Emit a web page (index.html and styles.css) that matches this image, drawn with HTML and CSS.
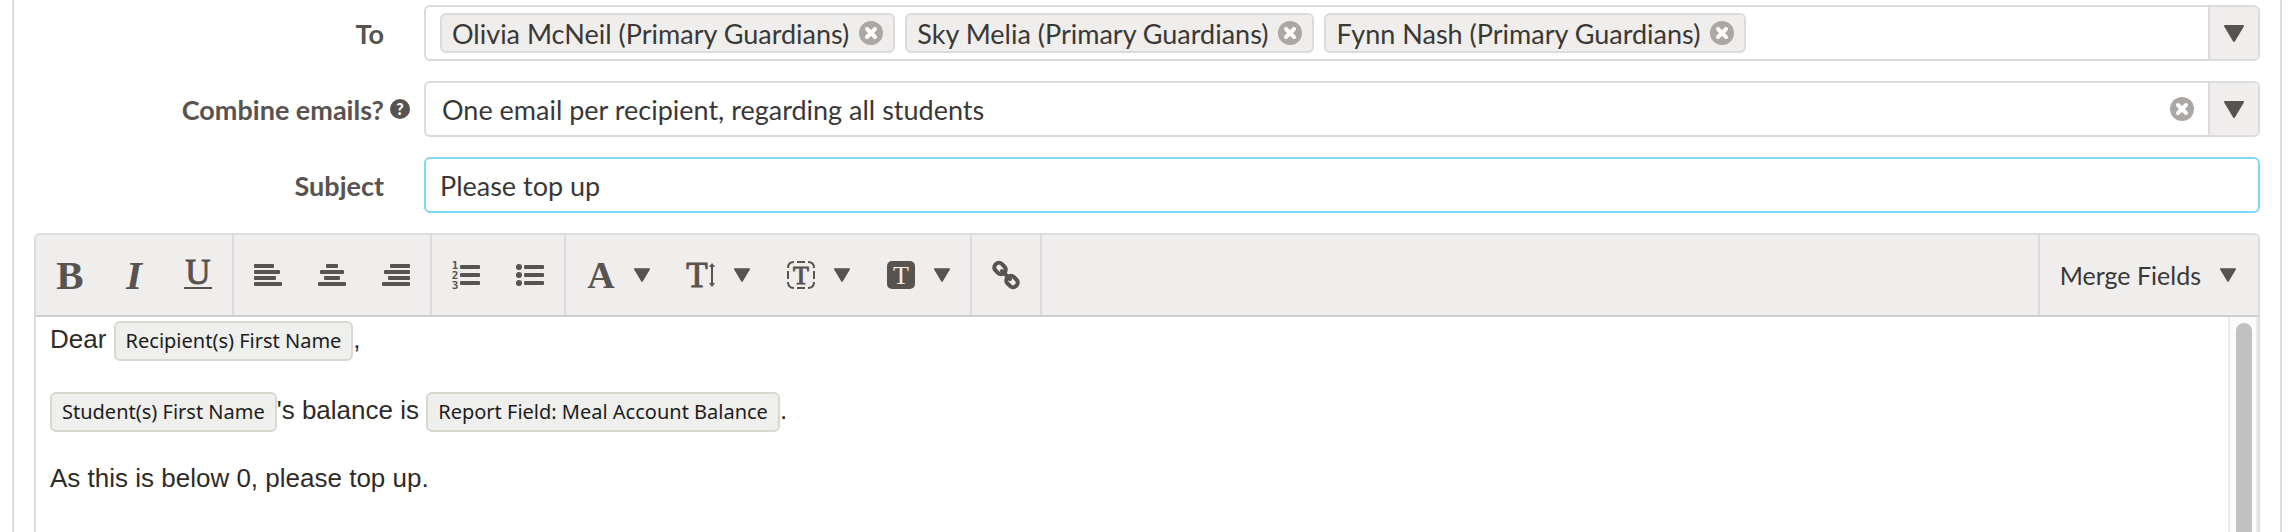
FILE: index.html
```
<!DOCTYPE html>
<html lang="en">
<head>
    <meta charset="UTF-8">
    <meta name="viewport" content="width=device-width, initial-scale=1.0">
    <title>Compose Email</title>
    <link rel="stylesheet" href="styles.css">
</head>
<body>
    <!-- Shared icon shapes -->
    <svg class="sprite" aria-hidden="true">
        <symbol id="icon-clear" viewBox="0 0 24 24">
            <circle cx="12" cy="12" r="12" fill="#aba7a4"/>
            <path d="M8 8l8 8M16 8l-8 8" class="cross"/>
        </symbol>
        <symbol id="icon-caret" viewBox="0 0 20 17">
            <path d="M1 1h18l-9 15z" fill="#595350" stroke="#595350" stroke-width="2" stroke-linejoin="round"/>
        </symbol>
    </svg>

    <form class="panel">
        <div class="row">
            <div class="label-cell"><label for="to">To</label></div>
            <div class="field">
                <div class="chips">
                    <span class="chip">Olivia McNeil (Primary Guardians)
                        <button type="button" class="clear" aria-label="Remove Olivia McNeil"><svg><use href="#icon-clear"/></svg></button>
                    </span>
                    <span class="chip">Sky Melia (Primary Guardians)
                        <button type="button" class="clear" aria-label="Remove Sky Melia"><svg><use href="#icon-clear"/></svg></button>
                    </span>
                    <span class="chip">Fynn Nash (Primary Guardians)
                        <button type="button" class="clear" aria-label="Remove Fynn Nash"><svg><use href="#icon-clear"/></svg></button>
                    </span>
                    <input type="text" id="to" name="to" class="chip-input">
                </div>
                <button type="button" class="open" aria-label="Show recipients"><svg><use href="#icon-caret"/></svg></button>
            </div>
        </div>

        <div class="row">
            <div class="label-cell with-help">
                <label for="combine">Combine emails?</label>
                <button type="button" class="help" aria-label="Help">?</button>
            </div>
            <div class="field">
                <select id="combine" name="combine" class="combine">
                    <option>One email per recipient, regarding all students</option>
                </select>
                <button type="button" class="clear" aria-label="Clear selection"><svg><use href="#icon-clear"/></svg></button>
                <button type="button" class="open" aria-label="Show options"><svg><use href="#icon-caret"/></svg></button>
            </div>
        </div>

        <div class="row">
            <div class="label-cell"><label for="subject">Subject</label></div>
            <input type="text" id="subject" name="subject" class="subject" value="Please top up">
        </div>

        <div class="editor">
            <div class="toolbar">
                <div class="group">
                    <button type="button" class="tool" aria-label="Bold">
                        <svg class="icon" viewBox="0 0 28 28"><text x="14" y="28" class="serif bold" font-size="41">B</text></svg>
                    </button>
                    <button type="button" class="tool" aria-label="Italic">
                        <svg class="icon" viewBox="0 0 28 28"><text x="14" y="28" class="serif bold italic" font-size="41">I</text></svg>
                    </button>
                    <button type="button" class="tool" aria-label="Underline">
                        <svg class="icon" viewBox="0 0 28 28"><text x="14" y="23" class="serif stroked" font-size="35">U</text><rect y="26" width="28" height="2"/></svg>
                    </button>
                </div>
                <div class="group">
                    <button type="button" class="tool" aria-label="Align left">
                        <svg class="icon" viewBox="0 0 28 28"><rect y="3" width="20" height="4" rx="1"/><rect y="9" width="26" height="4" rx="1"/><rect y="15" width="22" height="4" rx="1"/><rect y="21" width="28" height="4" rx="1"/></svg>
                    </button>
                    <button type="button" class="tool" aria-label="Align center">
                        <svg class="icon" viewBox="0 0 28 28"><rect x="8" y="3" width="12" height="4" rx="1"/><rect x="2" y="9" width="24" height="4" rx="1"/><rect x="6" y="15" width="16" height="4" rx="1"/><rect y="21" width="28" height="4" rx="1"/></svg>
                    </button>
                    <button type="button" class="tool" aria-label="Align right">
                        <svg class="icon" viewBox="0 0 28 28"><rect x="8" y="3" width="20" height="4" rx="1"/><rect x="2" y="9" width="26" height="4" rx="1"/><rect x="6" y="15" width="22" height="4" rx="1"/><rect y="21" width="28" height="4" rx="1"/></svg>
                    </button>
                </div>
                <div class="group">
                    <button type="button" class="tool" aria-label="Numbered list">
                        <svg class="icon" viewBox="0 0 28 28"><g class="digits"><text x="3" y="8">1</text><text x="3" y="18">2</text><text x="3" y="28">3</text></g><rect x="8" y="4" width="20" height="4" rx="1"/><rect x="8" y="12" width="20" height="4" rx="1"/><rect x="8" y="20" width="20" height="4" rx="1"/></svg>
                    </button>
                    <button type="button" class="tool" aria-label="Bulleted list">
                        <svg class="icon" viewBox="0 0 28 28"><circle cx="3" cy="6" r="3"/><circle cx="3" cy="14" r="3"/><circle cx="3" cy="22" r="3"/><rect x="8" y="4" width="20" height="4" rx="1"/><rect x="8" y="12" width="20" height="4" rx="1"/><rect x="8" y="20" width="20" height="4" rx="1"/></svg>
                    </button>
                </div>
                <div class="group">
                    <button type="button" class="tool menu" aria-label="Font family">
                        <svg class="icon" viewBox="0 0 28 28"><text x="14" y="27" class="serif bold" font-size="38">A</text></svg>
                        <svg class="caret"><use href="#icon-caret"/></svg>
                    </button>
                    <button type="button" class="tool menu" aria-label="Font size">
                        <svg class="icon" viewBox="0 0 28 28"><text x="10" y="26" class="serif stroked" font-size="35">T</text><path d="M25 4v20" class="line"/><path d="M25 2l3 4h-6zM25 26l3-4h-6z"/></svg>
                        <svg class="caret"><use href="#icon-caret"/></svg>
                    </button>
                    <button type="button" class="tool menu" aria-label="Text color">
                        <svg class="icon" viewBox="0 0 28 28"><path d="M1 7q0-6 6-6M21 1q6 0 6 6M27 21q0 6-6 6M7 27q-6 0-6-6M10 1h8M10 27h8M1 10v8M27 10v8" class="line"/><text x="14" y="23" class="serif stroked" font-size="26">T</text></svg>
                        <svg class="caret"><use href="#icon-caret"/></svg>
                    </button>
                    <button type="button" class="tool menu" aria-label="Background color">
                        <svg class="icon" viewBox="0 0 28 28"><rect width="28" height="28" rx="5"/><text x="14" y="23" class="serif light" font-size="26">T</text></svg>
                        <svg class="caret"><use href="#icon-caret"/></svg>
                    </button>
                </div>
                <div class="group">
                    <button type="button" class="tool" aria-label="Insert link">
                        <svg class="icon" viewBox="0 0 28 28"><g class="chain"><rect x="2" y="3" width="12" height="9" rx="4" transform="rotate(45 8 7.5)"/><rect x="14" y="16" width="12" height="9" rx="4" transform="rotate(45 20 20.5)"/><path d="M10 10l8 8"/></g></svg>
                    </button>
                </div>
                <button type="button" class="merge">Merge Fields <svg class="caret"><use href="#icon-caret"/></svg></button>
            </div>

            <div class="content">
                <div class="message">
                    <p>Dear <span class="token">Recipient(s) First Name</span>,</p>
                    <p><span class="token">Student(s) First Name</span>'s balance is <span class="token">Report Field: Meal Account Balance</span>.</p>
                    <p>As this is below 0, please top up.</p>
                </div>
                <div class="scrollbar"><div class="thumb"></div></div>
            </div>
        </div>
    </form>
</body>
</html>
```
FILE: styles.css
```
* {
    box-sizing: border-box;
}
body {
    margin: 0;
    background-color: #fff;
    color: #3a3836;
    font-family: Lato, "Noto Sans", sans-serif;
    font-size: 27px;
}
button, input, select {
    font: inherit;
    color: inherit;
}
button {
    display: flex;
    align-items: center;
    justify-content: center;
    padding: 0;
    border: none;
    background: none;
    cursor: pointer;
}
.sprite {
    display: none;
}
.cross {
    stroke: #fff;
    stroke-width: 4;
    stroke-linecap: round;
}
.panel {
    display: flex;
    flex-direction: column;
    min-height: 100vh;
    margin: 0 10px 0 12px;
    padding: 5px 20px 0;
    border: solid #dcdada;
    border-width: 0 2px;
}

/* Form rows */
.row {
    display: flex;
    margin-bottom: 20px;
}
.label-cell {
    display: flex;
    flex: none;
    align-items: center;
    justify-content: flex-end;
    width: 390px;
    padding-right: 40px;
    color: #595350;
    font-weight: bold;
}
.with-help {
    gap: 6px;
    padding-right: 14px;
}
.help {
    width: 20px;
    height: 20px;
    border-radius: 50%;
    background-color: #595350;
    color: #fff;
    font-size: 16px;
    font-weight: 900;
    line-height: 20px;
}
.field, .subject {
    display: flex;
    flex: 1;
    align-items: center;
    min-width: 0;
    height: 56px;
    border: 2px solid #dcdada;
    border-radius: 6px;
    background-color: #fff;
}
.subject {
    padding: 0 14px;
    border-color: #7cd8f3;
    outline: none;
}
.chips {
    display: flex;
    flex: 1;
    gap: 10px;
    min-width: 0;
    padding-left: 14px;
}
.chip {
    display: flex;
    flex: none;
    align-items: center;
    gap: 10px;
    height: 40px;
    padding: 0 10px;
    border: 2px solid #dcdada;
    border-radius: 6px;
    background-color: #efeeec;
}
.chip .cross {
    stroke: #efeeec;
}
.chip-input {
    flex: 1;
    min-width: 0;
    border: none;
    outline: none;
}
.clear, .clear svg {
    flex: none;
    width: 24px;
    height: 24px;
}
.field > .clear {
    margin: 0 14px;
}
.combine {
    flex: 1;
    min-width: 0;
    height: 100%;
    padding: 0 16px;
    border: none;
    background: none;
    appearance: none;
}
.open {
    flex: none;
    width: 50px;
    height: 100%;
    border-left: 2px solid #dcdada;
    border-radius: 0 4px 4px 0;
    background-color: #efeeec;
}
.open svg {
    width: 20px;
    height: 17px;
}

/* Editor */
.editor {
    display: flex;
    flex: 1;
    flex-direction: column;
    border: 2px solid #dedbdb;
    border-bottom: none;
    border-radius: 6px 6px 0 0;
}
.toolbar {
    display: flex;
    height: 82px;
    border-bottom: 2px solid #cecece;
    border-radius: 4px 4px 0 0;
    background-color: #efeeec;
}
.group {
    display: flex;
    padding: 0 2px;
    border-right: 2px solid #dcdada;
}
.tool {
    width: 64px;
}
.menu {
    gap: 19px;
    width: 100px;
}
.icon {
    width: 28px;
    height: 28px;
    fill: #595350;
    overflow: visible;
}
.caret {
    width: 16px;
    height: 14px;
}
.serif {
    font-family: "Liberation Serif", serif;
    text-anchor: middle;
}
.bold {
    font-weight: bold;
}
.italic {
    font-style: italic;
}
.stroked {
    stroke: #595350;
    stroke-width: 1;
}
.light {
    fill: #efeeec;
}
.line {
    fill: none;
    stroke: #595350;
    stroke-width: 2;
}
.digits {
    font-family: "DejaVu Sans Mono", monospace;
    font-size: 11px;
    font-weight: bold;
    text-anchor: middle;
}
.chain {
    fill: none;
    stroke: #595350;
    stroke-width: 4;
    stroke-linecap: round;
}
.merge {
    gap: 19px;
    margin-left: auto;
    padding: 0 22px 0 20px;
    border-left: 2px solid #dcdada;
    font-size: 25px;
}
.content {
    display: flex;
    flex: 1;
}
.message {
    flex: 1;
    padding: 4px 14px;
    color: #2f2b29;
    font-family: "Liberation Sans", Arial, sans-serif;
    font-size: 26px;
    line-height: 30px;
}
.message p {
    margin: 0 0 31px;
}
.token {
    display: inline-block;
    height: 40px;
    padding: 0 10px;
    border: 2px solid #d8d8ce;
    border-radius: 6px;
    background-color: #efefed;
    color: #1c1c1c;
    font-family: "Noto Sans", sans-serif;
    font-size: 20px;
    line-height: 36px;
}
.scrollbar {
    display: flex;
    width: 30px;
    padding: 6px 4px 0 6px;
    border: solid #ebebeb;
    border-width: 0 2px;
    background-color: #fafafa;
}
.thumb {
    width: 16px;
    border-radius: 8px 8px 0 0;
    background-color: #c1c1c1;
}
```
